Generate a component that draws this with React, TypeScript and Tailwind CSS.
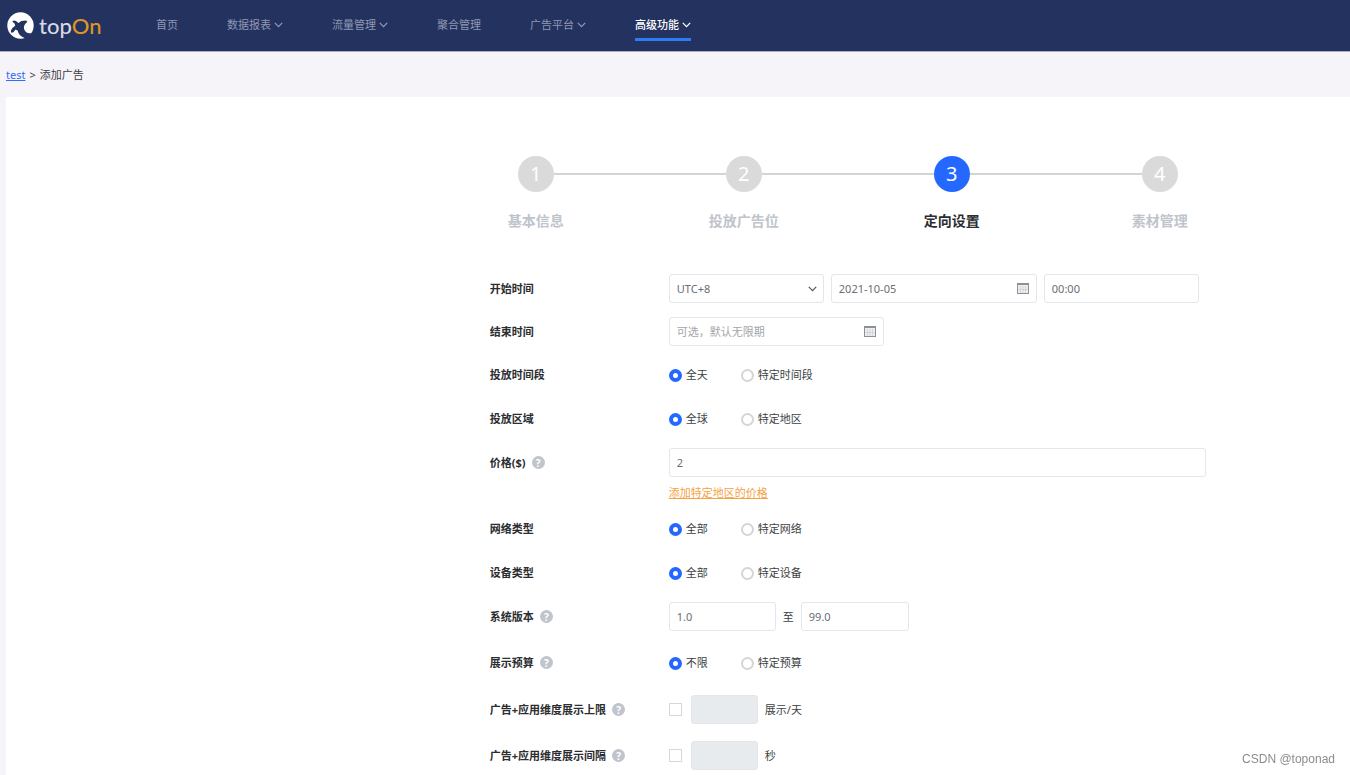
import { useState } from "react";
import type { ReactNode } from "react";

const NAV = [
    { label: "首页", menu: false },
    { label: "数据报表", menu: true },
    { label: "流量管理", menu: true },
    { label: "聚合管理", menu: false },
    { label: "广告平台", menu: true },
    { label: "高级功能", menu: true, active: true },
];

const STEPS = ["基本信息", "投放广告位", "定向设置", "素材管理"];
const CURRENT_STEP = 2;

const field =
    "h-[29px] rounded-[3px] border border-[#e4e6eb] bg-white px-[7px] text-[11px] text-[#6b6e73] outline-none focus:border-[#2468ff]";

function Logo() {
    return (
        <a href="#" aria-label="topOn" className="flex w-[149px] items-center gap-[5px]">
            <svg width="27" height="27" viewBox="0 0 27 27">
                <circle cx="13.5" cy="13.5" r="13.2" fill="#fff" />
                <path
                    d="M5.2 9.4 L6.8 8.4 L9 9 L11.4 11 L14.4 9 L19 8.4 L20.4 9.8 L18.4 11.8 C16.8 13.6 16.4 15.8 17.6 18.2 C19 20.8 21.4 21.8 24.4 21 C22.8 24.2 20.4 26 18.4 26.4 C14.4 25 11.4 22.6 10.8 18.8 L8.6 17.6 L6.4 20.2 L4.2 20.8 L3.8 18.8 L5.4 16 L8.2 13.8 L7.6 11.4 Z"
                    fill="#24325f"
                />
            </svg>
            <span className="font-[Lato] text-[22px] leading-6 font-medium text-[#d5d9e6]">
                top<span className="text-[#dd9426]">On</span>
            </span>
        </a>
    );
}

function Chevron({ className }: { className?: string }) {
    return (
        <svg width="9" height="6" viewBox="0 0 9 6" fill="none" className={className}>
            <path d="M0.8 0.9 L4.5 4.6 L8.2 0.9" stroke="currentColor" strokeWidth="1.3" />
        </svg>
    );
}

function HelpIcon() {
    return (
        <button
            type="button"
            aria-label="帮助"
            className="flex h-[13px] w-[13px] items-center justify-center rounded-full bg-[#c0c4cc] text-[10px] leading-none font-bold text-white"
        >
            ?
        </button>
    );
}

function CalendarIcon() {
    return (
        <svg width="12" height="11" viewBox="0 0 12 11" className="shrink-0">
            <rect x="0.5" y="0.5" width="11" height="10" fill="#eceef0" stroke="#8d9095" />
            <path d="M1 1.5 H11" stroke="#8d9095" />
            <path d="M3.5 3 V10 M6 3 V10 M8.5 3 V10 M1 6.5 H11" stroke="#cfd1d4" strokeWidth="0.8" />
        </svg>
    );
}

type RowProps = {
    label: string;
    htmlFor?: string;
    help?: boolean;
    children: ReactNode;
};

function Row({ label, htmlFor, help, children }: RowProps) {
    return (
        <div className="flex items-start">
            <div className="flex h-[29px] w-[179px] shrink-0 items-center gap-[6px]">
                {htmlFor ? (
                    <label htmlFor={htmlFor} className="font-bold text-[#2b2d30]">{label}</label>
                ) : (
                    <span className="font-bold text-[#2b2d30]">{label}</span>
                )}
                {help && <HelpIcon />}
            </div>
            <div className="min-w-0 flex-1">{children}</div>
        </div>
    );
}

function RadioRow({ label, name, options, help }: { label: string; name: string; options: string[]; help?: boolean }) {
    const [value, setValue] = useState(options[0]);

    return (
        <Row label={label} help={help}>
            <div role="radiogroup" aria-label={label} className="flex h-[30px] items-center">
                {options.map((option) => (
                    <label key={option} className="flex min-w-[72px] items-center gap-1">
                        <input
                            type="radio"
                            name={name}
                            checked={value === option}
                            onChange={() => setValue(option)}
                            className="h-[13px] w-[13px] appearance-none rounded-full border-2 border-[#d3d5d9] bg-white checked:border-4 checked:border-[#2468ff]"
                        />
                        {option}
                    </label>
                ))}
            </div>
        </Row>
    );
}

function LimitRow({ label, name, unit }: { label: string; name: string; unit: string }) {
    const [enabled, setEnabled] = useState(false);

    return (
        <Row label={label} htmlFor={name} help>
            <div className="flex items-center">
                <input
                    id={name}
                    type="checkbox"
                    checked={enabled}
                    onChange={(e) => setEnabled(e.target.checked)}
                    className="h-[13px] w-[13px] appearance-none border border-[#d5d7db] bg-white checked:border-[#2468ff] checked:bg-[#2468ff]"
                />
                <input
                    type="text"
                    aria-label={label}
                    disabled={!enabled}
                    className={`${field} mr-[7px] ml-[9px] w-[67px] disabled:bg-[#e8ebee]`}
                />
                <span>{unit}</span>
            </div>
        </Row>
    );
}

export default function App() {
    const [endDate, setEndDate] = useState("");

    return (
        <div className="flex min-h-screen flex-col bg-[#f6f4f8] font-['Noto_Sans','Noto_Sans_CJK_SC',sans-serif] text-[11px] leading-4 text-[#3c3f44]">
            <header className="flex h-[52px] items-center border-b border-[#a9b0c6] bg-[#24325f] pl-[7px]">
                <Logo />
                <nav className="flex gap-[49px]">
                    {NAV.map((item) => (
                        <a
                            key={item.label}
                            href="#"
                            className={`flex h-[31px] items-center gap-[3px] border-b-[3px] pt-[2px] whitespace-nowrap ${
                                item.active
                                    ? "border-[#2f7bf0] font-medium text-white"
                                    : "border-transparent text-[#8f98b3]"
                            }`}
                        >
                            {item.label}
                            {item.menu && <Chevron />}
                        </a>
                    ))}
                </nav>
            </header>

            <div className="flex h-[45px] items-center gap-1 pl-[6px]">
                <a href="#" className="text-[#2f6bff] underline">test</a>
                <span>&gt;</span>
                <span>添加广告</span>
            </div>

            <main className="ml-[6px] flex-1 bg-white pt-[59px]">
                <div className="ml-[36%] max-w-[716px]">
                    {/* Steps */}
                    <div className="flex items-center px-[28px]">
                        {STEPS.map((step, i) => (
                            <div key={step} className={i > 0 ? "flex flex-1 items-center" : "flex items-center"}>
                                {i > 0 && <div className="h-[2px] flex-1 bg-[#d3d3d3]" />}
                                <div
                                    className={`flex h-9 w-9 items-center justify-center rounded-full text-xl text-white ${
                                        i === CURRENT_STEP ? "bg-[#2468ff]" : "bg-[#dadada]"
                                    }`}
                                >
                                    {i + 1}
                                </div>
                            </div>
                        ))}
                    </div>
                    <div className="mt-[19px] flex justify-between text-sm font-bold">
                        {STEPS.map((step, i) => (
                            <span
                                key={step}
                                className={`w-[92px] text-center ${
                                    i === CURRENT_STEP ? "text-[#2b2d30]" : "text-[#c0c4cc]"
                                }`}
                            >
                                {step}
                            </span>
                        ))}
                    </div>

                    <form className="mt-[43px]">
                        <div className="flex flex-col gap-[14px]">
                            <Row label="开始时间" htmlFor="timezone">
                                <div className="flex gap-[7px]">
                                    <div className="grid w-[155px] items-center">
                                        <select id="timezone" className={`${field} col-start-1 row-start-1 w-full appearance-none`}>
                                            <option>UTC+8</option>
                                            <option>UTC+0</option>
                                            <option>UTC-8</option>
                                        </select>
                                        <Chevron className="pointer-events-none col-start-1 row-start-1 mr-[7px] justify-self-end text-[#55585d]" />
                                    </div>
                                    <div className={`${field} flex w-[206px] items-center`}>
                                        <input
                                            type="text"
                                            aria-label="开始日期"
                                            defaultValue="2021-10-05"
                                            className="min-w-0 flex-1 outline-none"
                                        />
                                        <CalendarIcon />
                                    </div>
                                    <input type="text" aria-label="开始时刻" defaultValue="00:00" className={`${field} w-[155px]`} />
                                </div>
                            </Row>

                            <Row label="结束时间" htmlFor="end-date">
                                <div className={`${field} flex w-[215px] items-center`}>
                                    <input
                                        id="end-date"
                                        type="text"
                                        placeholder="可选，默认无限期"
                                        value={endDate}
                                        onChange={(e) => setEndDate(e.target.value)}
                                        className="min-w-0 flex-1 outline-none placeholder:text-[#a3a5a9]"
                                    />
                                    <CalendarIcon />
                                </div>
                            </Row>

                            <RadioRow label="投放时间段" name="period" options={["全天", "特定时间段"]} />
                            <RadioRow label="投放区域" name="region" options={["全球", "特定地区"]} />

                            <Row label="价格($)" htmlFor="price" help>
                                <input id="price" type="text" defaultValue="2" className={`${field} block w-full`} />
                                <a href="#" className="mt-2 block w-fit leading-[15px] text-[#f5a243] underline">
                                    添加特定地区的价格
                                </a>
                            </Row>

                            <RadioRow label="网络类型" name="network" options={["全部", "特定网络"]} />
                            <RadioRow label="设备类型" name="device" options={["全部", "特定设备"]} />
                        </div>

                        <div className="mt-[14px] flex flex-col gap-[17px]">
                            <Row label="系统版本" htmlFor="min-version" help>
                                <div className="flex items-center gap-[7px]">
                                    <input id="min-version" type="text" defaultValue="1.0" className={`${field} w-[107px]`} />
                                    <span>至</span>
                                    <input type="text" aria-label="最高系统版本" defaultValue="99.0" className={`${field} w-[108px]`} />
                                </div>
                            </Row>
                            <RadioRow label="展示预算" name="budget" options={["不限", "特定预算"]} help />
                            <LimitRow label="广告+应用维度展示上限" name="cap" unit="展示/天" />
                            <LimitRow label="广告+应用维度展示间隔" name="interval" unit="秒" />
                        </div>
                    </form>
                </div>
            </main>

            <div className="fixed right-[15px] bottom-2 font-['Liberation_Sans'] text-[12px] text-[#8c8c8c]">CSDN @toponad</div>
        </div>
    );
}
